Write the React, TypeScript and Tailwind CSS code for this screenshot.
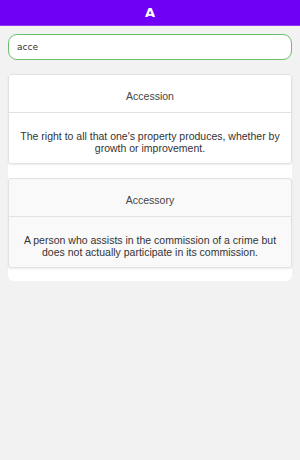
import { useState } from "react";

interface Term {
  word: string;
  meaning: string;
}

const terms: Term[] = [
  {
    word: "Accession",
    meaning: "The right to all that one's property produces, whether by growth or improvement.",
  },
  {
    word: "Accessory",
    meaning: "A person who assists in the commission of a crime but does not actually participate in its commission.",
  },
];

export default function App() {
  const [query, setQuery] = useState("acce");

  return (
    <div className="min-h-[460px] bg-[#f2f2f2] font-['Liberation_Sans',Arial,sans-serif]">
      <div className="h-[26px] bg-[#7000f5] flex items-center justify-center border-b border-[#8c3cf7]">
        <span className="text-white font-bold text-[13px] font-['DejaVu_Sans',sans-serif]">A</span>
      </div>
      <div className="px-2 pt-[7px]">
        <input
          className="w-full h-[26px] rounded-[9px] border-[1.5px] border-[#6cbf6c] bg-white px-[8px] text-[9px] text-[#333] outline-none font-['DejaVu_Sans',sans-serif]"
          value={query}
          onChange={(e) => setQuery(e.target.value)}
        />
        <div className="mt-[14px] bg-white rounded-b-[6px] pb-[13px] flex flex-col gap-[14px]">
          {terms.map((t, i) => (
            <div
              key={t.word}
              className={`border border-[#e2e2e2] rounded-[3px] shadow-[0_1px_2px_rgba(0,0,0,0.08)] ${i % 2 ? "bg-[#f9f9f9]" : "bg-white"}`}
            >
              <div className="h-[38px] pt-[6px] flex items-center justify-center border-b border-[#e2e2e2] text-[10.5px] text-[#444]">
                {t.word}
              </div>
              <div className="h-[50px] pt-[8px] flex items-center justify-center px-[8px] text-center text-[10.5px] leading-[12px] text-[#333]">
                {t.meaning}
              </div>
            </div>
          ))}
        </div>
      </div>
    </div>
  );
}
